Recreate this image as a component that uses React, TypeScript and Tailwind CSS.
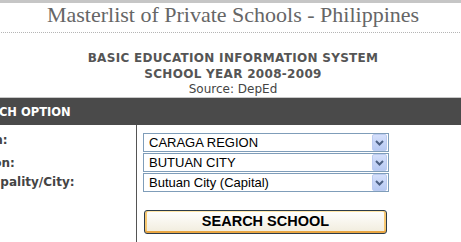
const selects = ["CARAGA REGION", "BUTUAN CITY", "Butuan City (Capital)"]

function Chevron() {
  return (
    <svg width="9" height="6" viewBox="0 0 9 6" className="block">
      <path d="M1 1 L4.5 4.5 L8 1" fill="none" stroke="#4d6185" strokeWidth="2" />
    </svg>
  )
}

function FakeSelect({ value }: { value: string }) {
  return (
    <div className="flex h-[19px] w-[246px] items-center border border-[#7f9db9] bg-white">
      <span className="flex-1 pl-[5px] font-['Liberation_Sans',Arial,sans-serif] text-[13px] leading-[17px] text-black">
        {value}
      </span>
      <span className="mr-px flex h-[17px] w-[15px] items-center justify-center rounded-[2px] border border-[#bccbf0] bg-gradient-to-b from-[#d5e0fb] to-[#b7c9f3]">
        <Chevron />
      </span>
    </div>
  )
}

export default function App() {
  return (
    <div className="h-[242px] w-[461px] overflow-hidden bg-white">
      <div className="ml-[-44px] w-[554px]">
        <div className="h-[3px] bg-[#c6c6c6]" />

        {/* title */}
        <div className="border-b border-dotted border-[#b5b5b5] pb-[5px] text-center font-['Liberation_Serif',Georgia,serif] text-[22px] leading-[24px] text-[#666]">
          Masterlist of Private Schools - Philippines
        </div>

        <div className="pt-[17px] text-center font-['DejaVu_Sans',Verdana,sans-serif] text-[#555]">
          <div className="text-[12px] font-bold leading-[16px] tracking-[0.3px]">BASIC EDUCATION INFORMATION SYSTEM</div>
          <div className="text-[12px] font-bold leading-[16px] tracking-[0.3px]">SCHOOL YEAR 2008-2009</div>
          <div className="text-[12px] leading-[15px] text-[#444]">Source: DepEd</div>
        </div>

        {/* search option bar */}
        <div className="border-t border-[#c8c8c8] bg-[#4a4a4a] pl-[9px] pt-[2px] font-['DejaVu_Sans',Verdana,sans-serif] text-[11.5px] font-bold leading-[25px] text-white">
          SEARCH OPTION
        </div>

        <div className="flex">
          <div className="w-[181px] shrink-0 border-r border-[#555] pt-[9px] font-['DejaVu_Sans',Verdana,sans-serif] text-[12px] font-bold leading-[13px] text-[#444]">
            <div>Region:</div>
            <div className="mt-[10px]">Division:</div>
            <div className="mt-[6px]">Municipality/City:</div>
            <div className="h-[60px]" />
          </div>

          <div className="pl-[6px] pt-[8px]">
            <div className="flex flex-col gap-px">
              {selects.map((s) => (
                <FakeSelect key={s} value={s} />
              ))}
            </div>
            <button className="ml-px mt-[18px] h-[24px] w-[243px] rounded-[3px] border border-[#2c3b48] bg-gradient-to-b from-white to-[#f1ecdc] font-['Liberation_Sans',Arial,sans-serif] text-[14.5px] font-bold text-black shadow-[inset_0_-2px_0_#e9a643,inset_2px_0_0_#f7c872,inset_-2px_0_0_#f7c872,inset_0_1px_0_#ffe6a8]">
              SEARCH SCHOOL
            </button>
          </div>
        </div>
      </div>
    </div>
  )
}
